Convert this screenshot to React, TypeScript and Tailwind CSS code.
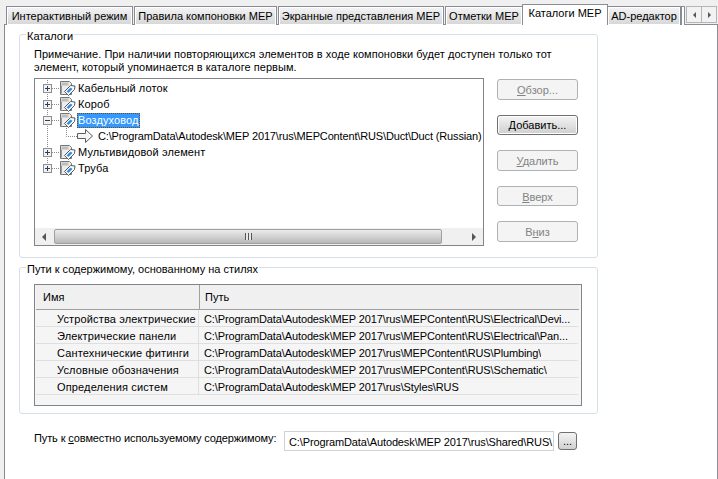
import React from "react";

const FONT = "font-['Liberation_Sans',sans-serif]";

const tabs = [
  { label: "Интерактивный режим", width: "w-[127px]" },
  { label: "Правила компоновки MEP", width: "w-[143px]" },
  { label: "Экранные представления MEP", width: "w-[166px]" },
  { label: "Отметки MEP", width: "w-[78px]" },
];

const paths = [
  ["Устройства электрические", "C:\\ProgramData\\Autodesk\\MEP 2017\\rus\\MEPContent\\RUS\\Electrical\\Devi..."],
  ["Электрические панели", "C:\\ProgramData\\Autodesk\\MEP 2017\\rus\\MEPContent\\RUS\\Electrical\\Pan..."],
  ["Сантехнические фитинги", "C:\\ProgramData\\Autodesk\\MEP 2017\\rus\\MEPContent\\RUS\\Plumbing\\"],
  ["Условные обозначения", "C:\\ProgramData\\Autodesk\\MEP 2017\\rus\\MEPContent\\RUS\\Schematic\\"],
  ["Определения систем", "C:\\ProgramData\\Autodesk\\MEP 2017\\rus\\Styles\\RUS"],
];

const TAB_CLASS =
  "h-[19px] border border-b-0 border-[#898c95] bg-gradient-to-b from-[#f4f4f4] to-[#d6d6d6] flex items-center justify-center shrink-0 shadow-[inset_0_0_0_1px_#ffffff]";

// catalog page with the blue tag lying over it
const CatalogIcon = () => (
  <svg width="17" height="16" viewBox="0 0 17 16" className="shrink-0">
    <path d="M1.5 1.5h9l2 2v11h-11z" fill="#ececec" stroke="#777777" />
    <path d="M2.5 2.5h7v3h-7z" fill="#bdbdbd" />
    <path d="M2.5 5.5v8" stroke="#9a9a9a" />
    <path d="M5.5 11.5l6-6 4.5 0.5-0.5 3.5-6 6z" fill="#ffffff" stroke="#555555" />
    <path d="M7.5 11.5l4-4 2 1.5-4 4z" fill="#2f8be6" />
  </svg>
);

const ArrowIcon = () => (
  <svg width="16" height="14" viewBox="0 0 16 14" className="shrink-0">
    <path d="M0.5 4.5h8v-4l7 6.5-7 6.5v-4h-8z" fill="#f4f4f4" stroke="#5c5c5c" />
  </svg>
);

// dotted connectors and the +/- box of a tree row
const Gutter = ({ open, last }: { open?: boolean; last?: boolean }) => (
  <svg width="16" height="16" viewBox="0 0 16 16" className="shrink-0">
    <path d={last ? "M4.5 0V8" : "M4.5 0V16"} stroke="#8a8a8a" strokeDasharray="1 1" fill="none" />
    <path d="M9 8.5H16" stroke="#8a8a8a" strokeDasharray="1 1" fill="none" />
    <rect x="0.5" y="4.5" width="8" height="8" fill="#f2f2f2" stroke="#8e8f8f" />
    <path d="M2 8.5h5" stroke="#2c3e6b" />
    {!open && <path d="M4.5 6v5" stroke="#2c3e6b" />}
  </svg>
);

const TreeRow = ({ label, open, last, selected }: { label: string; open?: boolean; last?: boolean; selected?: boolean }) => (
  <div className="flex items-center h-[16px] tracking-[0.1px]">
    <Gutter open={open} last={last} />
    <CatalogIcon />
    <span
      className={
        selected
          ? "ml-px h-[15px] px-px flex items-center bg-[#3399ff] text-white outline-1 outline-dotted outline-[#7a4a10] -outline-offset-1"
          : "ml-[2px]"
      }
    >
      {label}
    </span>
  </div>
);

const SideButton = ({ children, primary }: { children: React.ReactNode; primary?: boolean }) => (
  <div
    className={
      primary
        ? "w-[81px] h-[21px] rounded-[3px] border border-[#6f6f6f] bg-gradient-to-b from-[#f4f4f4] to-[#cfcfcf] flex items-center justify-center shadow-[inset_0_0_0_1px_#ffffff]"
        : "w-[81px] h-[21px] rounded-[3px] border border-[#adb2b5] bg-[#f4f4f4] text-[#838383] flex items-center justify-center"
    }
  >
    <span className="mt-[2px]">{children}</span>
  </div>
);

const Thumb = () => (
  <div className="w-[388px] h-[15px] rounded-[2px] border border-[#a0a0a0] bg-gradient-to-b from-[#ececec] to-[#b9b9b9] flex items-center justify-center">
    <div className="w-[7px] h-[7px] bg-[repeating-linear-gradient(90deg,#555555_0,#555555_1px,#e8e8e8_1px,#e8e8e8_3px)]" />
  </div>
);

export default function App() {
  return (
    <div className={`${FONT} text-[11px] leading-[13px] text-black w-[718px] h-[479px] overflow-hidden bg-[#f0f0f0] pt-[4px]`}>
      {/* tab strip */}
      <div className="relative z-10 flex items-end h-[21px] pl-[6px] -mb-px">
        {tabs.map((tab) => (
          <div key={tab.label} className={`${TAB_CLASS} ${tab.width} mr-px`}>
            {tab.label}
          </div>
        ))}
        <div className="h-[21px] w-[86px] -ml-[2px] border border-b-0 border-[#898c95] bg-white flex items-start justify-center pt-[2px] shrink-0 z-10">
          Каталоги MEP
        </div>
        <div className={`${TAB_CLASS} w-[74px] -ml-px`}>AD-редактор</div>
        <div className={`${TAB_CLASS} w-[4px]`} />
        <div className="ml-[1px] w-[31px] h-[17px] mb-[2px] border border-[#b5b5b5] bg-[#f2f2f2] flex shrink-0">
          <div className="w-[15px] border-r border-[#b5b5b5] flex items-center justify-center">
            <div className="w-0 h-0 border-y-[3px] border-y-transparent border-r-[3px] border-r-[#555555]" />
          </div>
          <div className="flex-1 flex items-center justify-center">
            <div className="w-0 h-0 border-y-[3px] border-y-transparent border-l-[3px] border-l-[#555555]" />
          </div>
        </div>
      </div>

      {/* tab page */}
      <div className="ml-[4px] h-[460px] border border-[#898c95] bg-white pl-[14px] pt-[3px]">
        <fieldset className="w-[579px] h-[230px] rounded-[3px] border border-[#d5dfe5] pl-[14px]">
          <legend className="-ml-[8px] px-px h-[13px] pt-px leading-[14px]">Каталоги</legend>
          <p className="mt-[7px] h-[26px] tracking-[0.05px]">
            Примечание. При наличии повторяющихся элементов в ходе компоновки будет доступен только тот
            <br />
            элемент, который упоминается в каталоге первым.
          </p>
          <div className="flex mt-[4px]">
            <div className="w-[450px] h-[168px] border border-[#82838b] flex flex-col">
              <div className="flex-1 pl-[8px] pt-px whitespace-nowrap overflow-hidden">
                <TreeRow label="Кабельный лоток" />
                <TreeRow label="Короб" />
                <TreeRow label="Воздуховод" open selected />
                <div className="flex items-center h-[16px]">
                  <svg width="34" height="16" viewBox="0 0 34 16" className="shrink-0">
                    <path d="M4.5 0V16" stroke="#8a8a8a" strokeDasharray="1 1" fill="none" />
                    <path d="M23.5 0V8.5H34" stroke="#8a8a8a" strokeDasharray="1 1" fill="none" />
                  </svg>
                  <ArrowIcon />
                  <span className="ml-[5px] tracking-[-0.15px]">C:\ProgramData\Autodesk\MEP 2017\rus\MEPContent\RUS\Duct\Duct (Russian)</span>
                </div>
                <TreeRow label="Мультивидовой элемент" />
                <TreeRow label="Труба" last />
              </div>
              <div className="h-[17px] bg-[#f0f0f0] flex items-center pl-[19px] relative">
                <div className="absolute left-[7px] top-[5px] w-0 h-0 border-y-[4px] border-y-transparent border-r-[4px] border-r-[#555555]" />
                <Thumb />
                <div className="absolute right-[7px] top-[5px] w-0 h-0 border-y-[4px] border-y-transparent border-l-[4px] border-l-[#555555]" />
              </div>
            </div>
            <div className="ml-[13px] h-[164px] pt-px flex flex-col gap-[14.75px]">
              <SideButton><u>О</u>бзор...</SideButton>
              <SideButton primary><u>Д</u>обавить...</SideButton>
              <SideButton><u>У</u>далить</SideButton>
              <SideButton><u>В</u>верх</SideButton>
              <SideButton>В<u>н</u>из</SideButton>
            </div>
          </div>
        </fieldset>

        <fieldset className="mt-[3px] w-[579px] h-[153px] rounded-[3px] border border-[#d5dfe5] pl-[14px]">
          <legend className="-ml-[8px] px-px h-[13px] pt-px leading-[14px]">Пути к содержимому, основанному на стилях</legend>
          <div className="mt-[10px] w-[548px] h-[122px] border border-[#82838b] bg-[#f5f5f5] pl-px">
            <div className="h-[25px] w-[543px] flex items-center bg-[#f0f0f0] border-b border-[#a0a0a0]">
              <div className="w-[164px] h-full pl-[7px] flex items-center border-r border-[#a0a0a0]">Имя</div>
              <div className="pl-[5px]">Путь</div>
            </div>
            {paths.map(([name, path]) => (
              <div key={name} className="w-[542px] h-[17px] flex items-center border-b border-[#dfdfdf] whitespace-nowrap">
                <div className="w-[163px] h-full pl-[21px] pt-[2px] flex items-center border-r border-[#dfdfdf] tracking-[0.15px]">{name}</div>
                <div className="h-full pl-[5px] pt-[2px] flex items-center overflow-hidden tracking-[-0.12px]">{path}</div>
              </div>
            ))}
          </div>
        </fieldset>

        <div className="mt-[17px] ml-[15px] flex items-start whitespace-nowrap">
          <span className="w-[250px] mt-[1px] tracking-[-0.12px]">
            Путь к <u>с</u>овместно используемому содержимому:
          </span>
          <div className="w-[270px] h-[20px] border border-[#cfd3d6] flex items-center pl-[4px] pt-[2px] overflow-hidden tracking-[-0.12px]">
            C:\ProgramData\Autodesk\MEP 2017\rus\Shared\RUS\
          </div>
          <div className="ml-[4px] mt-px w-[19px] h-[18px] rounded-[3px] border border-[#707070] bg-gradient-to-b from-[#f4f4f4] to-[#d0d0d0] flex items-center justify-center">
            ...
          </div>
        </div>
      </div>
    </div>
  );
}
